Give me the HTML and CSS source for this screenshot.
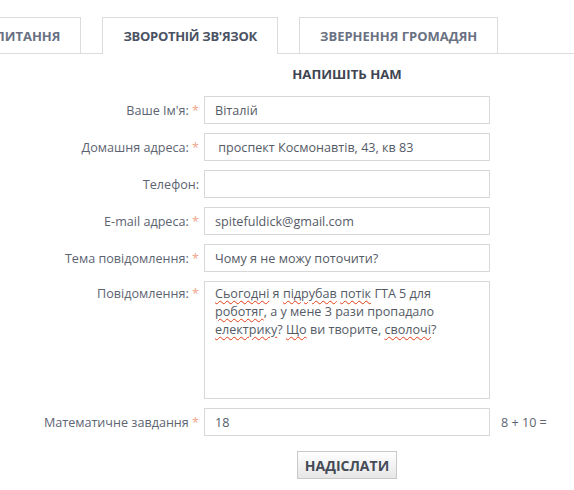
FILE: index.html
```html
<!DOCTYPE html>
<html lang="uk">
<head>
<meta charset="utf-8">
<title>Зворотній зв'язок</title>
<link rel="stylesheet" href="styles.css">
</head>
<body>
<div class="tabs">
  <div class="tab tab-first">ПИТАННЯ</div>
  <div class="tab active">ЗВОРОТНІЙ ЗВ'ЯЗОК</div>
  <div class="tab">ЗВЕРНЕННЯ ГРОМАДЯН</div>
</div>
<form class="form">
  <div class="heading">НАПИШІТЬ НАМ</div>

  <label class="lbl">Ваше Ім'я: <span class="req">*</span></label>
  <div class="field">Віталій</div>

  <label class="lbl">Домашня адреса: <span class="req">*</span></label>
  <div class="field">&nbsp;проспект Космонавтів, 43, кв 83</div>

  <label class="lbl">Телефон:</label>
  <div class="field"></div>

  <label class="lbl">E-mail адреса: <span class="req">*</span></label>
  <div class="field">spitefuldick@gmail.com</div>

  <label class="lbl">Тема повідомлення: <span class="req">*</span></label>
  <div class="field">Чому я не можу поточити?</div>

  <label class="lbl lbl-top">Повідомлення: <span class="req">*</span></label>
  <div class="field area"><span class="sp">Сьогодні</span> я <span class="sp">підрубав</span> <span class="sp">потік</span> ГТА 5 для<br><span class="sp">роботяг</span>, а у мене 3 рази пропадало<br><span class="sp">електрику</span>? <span class="sp">Що</span> ви творите, <span class="sp">сволочі</span>?</div>

  <label class="lbl">Математичне завдання <span class="req">*</span></label>
  <div class="field">18</div>
  <div class="captcha">8 + 10 =</div>

  <div class="actions"><button type="button" class="btn">НАДІСЛАТИ</button></div>
</form>
</body>
</html>
```
FILE: styles.css
```css
html, body {
  margin: 0;
  padding: 0;
  background: #fff;
}
body {
  font-family: "Open Sans", "Noto Sans", sans-serif;
  color: #5d6472;
  width: 574px;
  height: 490px;
  overflow: hidden;
}
.tabs {
  display: flex;
  gap: 21px;
  margin-top: 17px;
  border-bottom: 1px solid #dcdcdc;
  height: 36px;
}
.tab {
  height: 36px;
  box-sizing: border-box;
  border: 1px solid #dcdcdc;
  border-bottom: none;
  padding: 0 20px;
  display: flex;
  align-items: center;
  font-size: 13px;
  font-weight: 700;
  color: #6a7183;
  background: #fff;
}
.tab-first {
  margin-left: -26px;
}
.tab.active {
  height: 37px;
  color: #4a5263;
  letter-spacing: -0.3px;
  position: relative;
  z-index: 1;
}
.form {
  display: grid;
  grid-template-columns: 199px 286px auto;
  column-gap: 5px;
  row-gap: 9px;
  align-items: center;
  margin-top: 11px;
}
.heading {
  grid-column: 2;
  text-align: center;
  font-size: 13.2px;
  font-weight: 700;
  color: #3f4552;
  margin-bottom: 4px;
}
.lbl {
  grid-column: 1;
  text-align: right;
  font-size: 12.6px;
  color: #5d6472;
  white-space: nowrap;
}
.lbl-top {
  align-self: start;
  padding-top: 4px;
}
.req {
  color: #f0a48c;
}
.field {
  grid-column: 2;
  box-sizing: border-box;
  height: 28px;
  border: 1px solid #d8d8d8;
  padding: 0 10px;
  display: flex;
  align-items: center;
  font-size: 12.6px;
  color: #555b66;
  white-space: nowrap;
}
.field.area {
  display: block;
  height: 118px;
  padding: 3px 10px;
  line-height: 18px;
}
.sp {
  text-decoration: underline wavy #e0401a;
  text-decoration-thickness: 1px;
  text-underline-offset: 2px;
}
.captcha {
  grid-column: 3;
  padding-left: 6px;
  font-size: 12.6px;
  color: #5d6472;
}
.actions {
  grid-column: 2;
  display: flex;
  justify-content: center;
  margin-top: 6px;
}
.btn {
  width: 100px;
  height: 28px;
  border: 1px solid #c8c8c8;
  background: linear-gradient(#ffffff, #e6e6e6);
  font-family: "Open Sans", "Noto Sans", sans-serif;
  font-size: 14px;
  font-weight: 700;
  color: #454b57;
  padding: 0;
}
```
